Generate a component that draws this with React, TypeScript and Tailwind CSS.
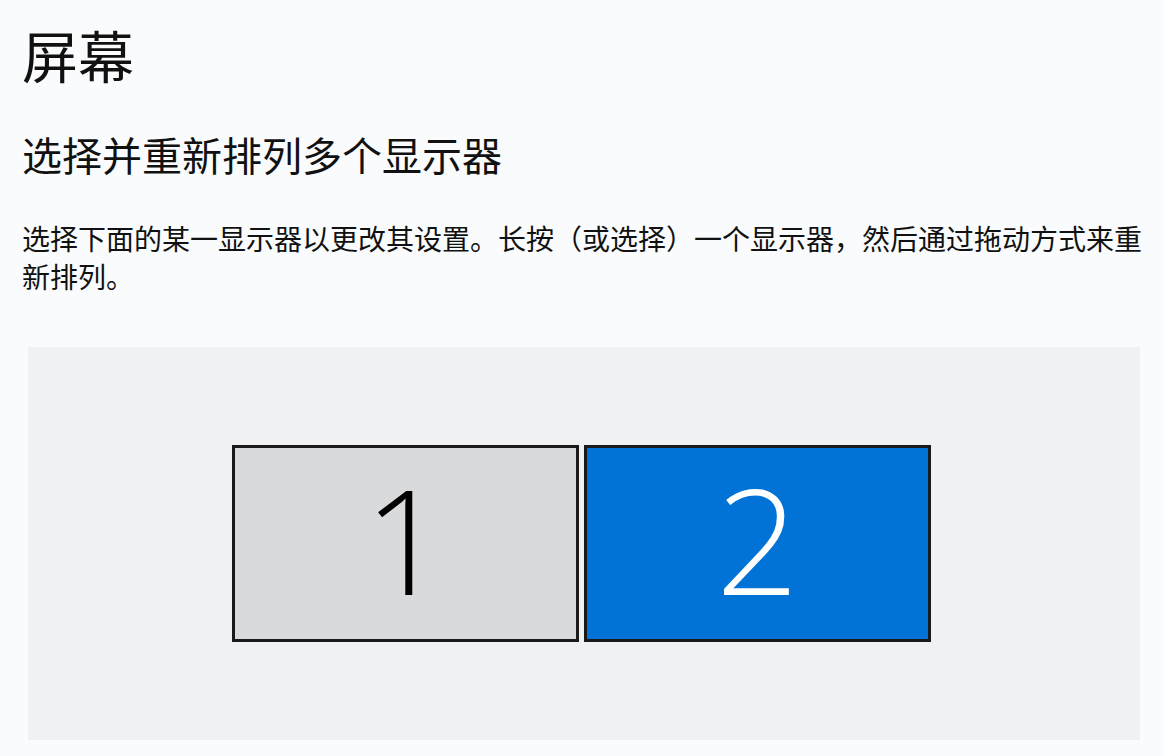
const cjk = { fontFamily: '"Noto Sans CJK SC", "Noto Sans", sans-serif' };
const digit = { fontFamily: '"Open Sans", "Noto Sans", sans-serif' };

export default function App() {
  return (
    <div className="w-[1164px] h-[756px] bg-[#fafbfc] text-[#111] overflow-hidden" style={cjk}>
      <div className="pl-[22px] pt-[18px]">
        <h1 className="text-[56px] leading-[72px] font-normal">屏幕</h1>
        <h2 className="mt-[38px] text-[40px] leading-[52px] font-normal">选择并重新排列多个显示器</h2>
        <p className="mt-[39px] w-[1130px] text-[28px] leading-[38px]">
          选择下面的某一显示器以更改其设置。长按（或选择）一个显示器，然后通过拖动方式来重新排列。
        </p>
      </div>

      {/* display arrangement area */}
      <div className="ml-[28px] mt-[52px] w-[1112px] h-[393px] bg-[#f0f1f3] flex items-center justify-center gap-[5px] pr-[5px]">
        <div className="w-[347px] h-[197px] border-[3px] border-[#1a1a1a] bg-[#d9dadc] flex items-center justify-center pb-[10px]">
          <span className="text-[145px] leading-none font-light text-black" style={digit}>
            1
          </span>
        </div>
        <div className="w-[347px] h-[197px] border-[3px] border-[#1a1a1a] bg-[#0173d7] flex items-center justify-center pb-[10px]">
          <span className="text-[145px] leading-none font-light text-white" style={digit}>
            2
          </span>
        </div>
      </div>
    </div>
  );
}
